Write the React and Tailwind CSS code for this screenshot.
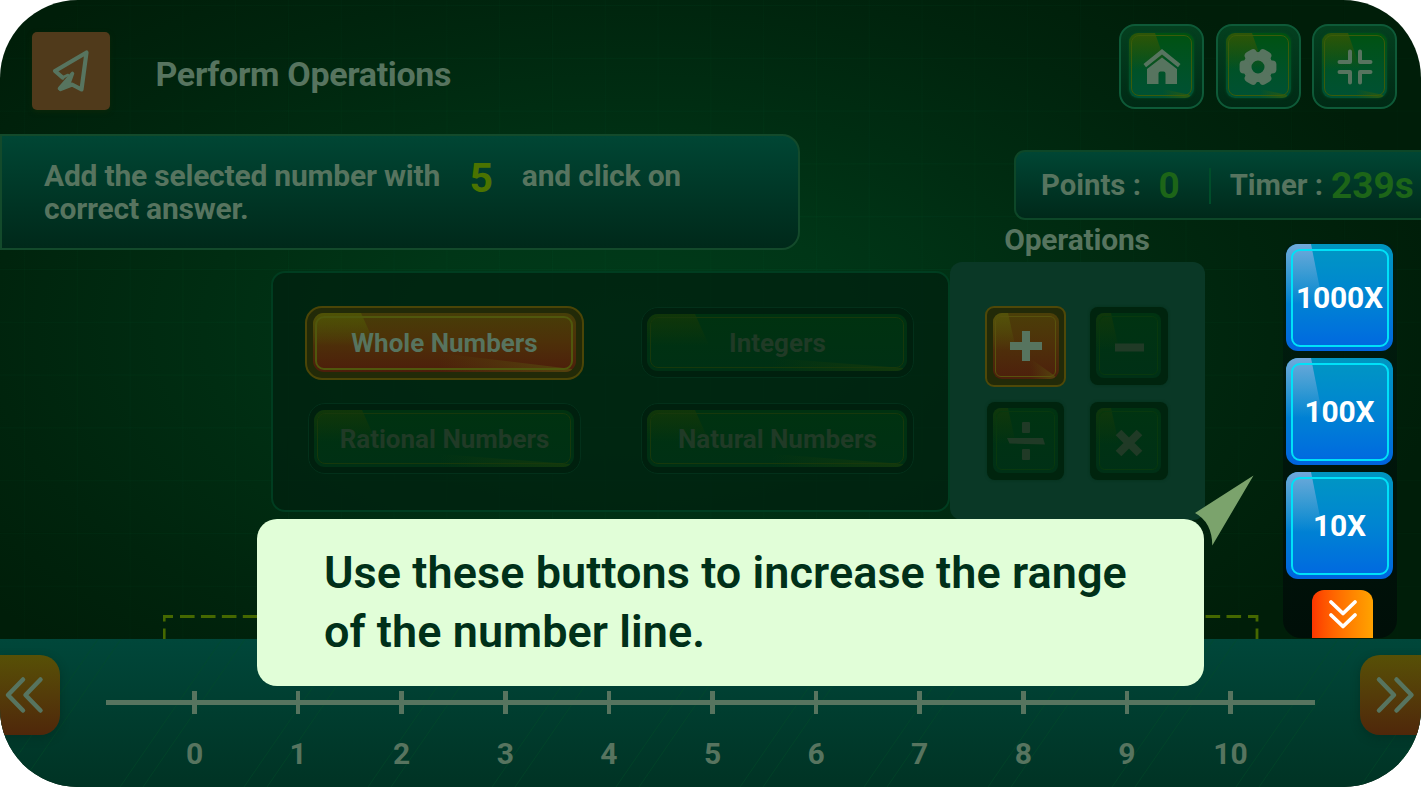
import React from "react";

function Gloss({ width, height, cut, slope = 0.45, top, wedge, flareX, flareY, id }) {
  return (
    <svg className="absolute inset-0 h-full w-full" viewBox={`0 0 ${width} ${height}`} preserveAspectRatio="none">
      <defs>
        <linearGradient id={`${id}-a`} x1="0" y1="0" x2="0" y2="1">
          <stop offset="0" stopColor={top} stopOpacity="1" />
          <stop offset="1" stopColor={top} stopOpacity="0" />
        </linearGradient>
        <linearGradient id={`${id}-b`} x1="0" y1="0" x2="1" y2="0">
          <stop offset="0" stopColor={wedge} stopOpacity="0" />
          <stop offset="1" stopColor={wedge} stopOpacity="1" />
        </linearGradient>
      </defs>
      <path d={`M0 0H${cut}L${cut + height * 0.56 * slope} ${height * 0.56}H0Z`} fill={`url(#${id}-a)`} />
      {flareX !== undefined && (
        <path d={`M${flareX} ${flareY}L${width - 4} ${height - 3}V${height}H${flareX}Z`} fill={`url(#${id}-b)`} />
      )}
    </svg>
  );
}

function TopButton({ id, children }) {
  return (
    <button className="flex h-[85px] w-[85px] items-center justify-center rounded-[16px] border-2 border-[#0e5a38] bg-linear-to-b from-[#04401f] to-[#002a15] pb-[2px]">
      <span className="relative flex h-[65px] w-[65px] items-center justify-center overflow-hidden rounded-[9px] bg-linear-to-b from-[#00520f] to-[#005134] shadow-[0_0_3px_#034d22]">
        <Gloss id={id} width={65} height={65} cut={26} slope={0.35} top="#2f5508" wedge="#2c5a10" flareX={34} flareY={56} />
        <span className="absolute inset-[2px] rounded-[8px] border-[1.5px] border-[#3a5c0a]" />
        <span className="relative top-[1px]">{children}</span>
      </span>
    </button>
  );
}

function TypeButton({ id, label, active }) {
  if (active) {
    return (
      <button className="relative -mx-[3px] -my-[1.5px] flex h-[74px] w-[279px] items-center justify-center rounded-[17px] border-2 border-[#4b4507] bg-[#222a08]">
        <span className="relative flex h-[59px] w-[263px] items-center justify-center overflow-hidden rounded-[11px] bg-linear-to-b from-[#473e08] via-[#4d3009] to-[#4d1d0b]">
          <Gloss id={id} width={263} height={59} cut={48} top="#4f5206" wedge="#54420d" flareX={125} flareY={40} />
          <span className="absolute inset-[2.5px] rounded-[9px] border-2 border-[#50580d]" />
          <span className="relative left-[0.5px] text-[26px] leading-none font-bold text-[#57745f]">{label}</span>
        </span>
      </button>
    );
  }
  return (
    <button className="relative flex h-[71px] w-[273px] items-center justify-center rounded-[17px] border-[1.5px] border-[#03301a] bg-[#00200e]">
      <span className="relative flex h-[57px] w-[260px] items-center justify-center overflow-hidden rounded-[11px] bg-linear-to-b from-[#003210] to-[#003014]">
        <Gloss id={id} width={260} height={57} cut={48} top="#113609" wedge="#12380c" flareX={125} flareY={44} />
        <span className="absolute inset-[3px] rounded-[8px] border border-[#17380b]" />
        <span className="relative left-[0.5px] text-[26px] leading-none font-bold text-[#203a26]">{label}</span>
      </span>
    </button>
  );
}

function OpButton({ id, active, children }) {
  if (active) {
    return (
      <button className="-m-[1.25px] flex h-[81px] w-[81px] items-center justify-center rounded-[9px] border-2 border-[#4f4808] bg-[#222a08]">
        <span className="relative flex h-[66px] w-[66px] items-center justify-center overflow-hidden rounded-[9px] bg-linear-to-b from-[#4b3f08] via-[#4e300a] to-[#4d1f0c]">
          <Gloss id={id} width={66} height={66} cut={15} slope={0.22} top="#54520a" wedge="#54420d" flareX={38} flareY={46} />
          <span className="absolute inset-[2.5px] rounded-[6px] border border-[#58520d]" />
          <span className="relative">{children}</span>
        </span>
      </button>
    );
  }
  return (
    <button className="flex h-[77.5px] w-[77.5px] items-center justify-center rounded-[8px] bg-[#00240e] shadow-[0_0_3px_#04301b]">
      <span className="relative flex h-[65px] w-[65px] items-center justify-center overflow-hidden rounded-[8px] bg-linear-to-b from-[#003311] to-[#003016]">
        <Gloss id={id} width={65} height={65} cut={15} slope={0.22} top="#10370b" wedge="#0a3310" />
        <span className="absolute inset-[3px] rounded-[6px] border border-[#08380e]" />
        <span className="relative left-[0.5px]">{children}</span>
      </span>
    </button>
  );
}

function RangeButton({ id, label }) {
  return (
    <button className="relative flex h-[107px] w-[107px] shrink-0 items-center justify-center overflow-hidden rounded-[12px] bg-linear-to-b from-[#0095c0] via-[#0082d0] to-[#0063de]">
      <span className="absolute inset-[5.5px] rounded-[8px] bg-linear-to-b from-[#0095c4] via-[#0084d2] to-[#0069e0]" />
      <Gloss id={id} width={107} height={107} cut={25} slope={0.2} top="#70a8dc" wedge="#0069e0" />
      <span className="absolute inset-[4.5px] rounded-[9px] border-2 border-[#00e1f8]" />
      <span className="relative text-[30px] leading-none font-bold tracking-[-0.2px] text-white">{label}</span>
    </button>
  );
}

function Chevrons({ className, d, width, height, strokeWidth = 4.5 }) {
  return (
    <svg className={className} width={width} height={height} viewBox={`0 0 ${width} ${height}`} fill="none" stroke="currentColor" strokeWidth={strokeWidth} strokeLinecap="round" strokeLinejoin="round">
      <path d={d} />
    </svg>
  );
}

const ticks = [0, 1, 2, 3, 4, 5, 6, 7, 8, 9, 10];

export default function App() {
  return (
    <div className="h-[787px] w-[1421px] overflow-hidden bg-white font-['Roboto',sans-serif]">
      <div className="relative flex h-full w-full flex-col overflow-hidden rounded-[78px] bg-[radial-gradient(ellipse_820px_440px_at_630px_330px,#003b1a_0%,#003617_28%,#002d12_52%,#00240d_78%,#001e09_100%)]">
        <div className="absolute inset-0 bg-[linear-gradient(to_right,#00502a28_1px,transparent_1px),linear-gradient(to_bottom,#00502a38_1px,transparent_1px)] [mask-image:radial-gradient(ellipse_900px_500px_at_640px_330px,black_20%,#0004_100%)] bg-[size:52.8px_52.8px] bg-[position:24px_5px]" />

        <header className="relative flex h-[134px] shrink-0 items-start pl-[32px]">
          <div className="mt-[32px] h-[77.5px] w-[78px] rounded-[5px] bg-[#503a1b] shadow-[0_2px_5px_#0a2609]">
            <svg width="78" height="78" viewBox="0 0 78 78" fill="none" stroke="#57745f" strokeWidth="4.2" strokeLinejoin="round" strokeLinecap="round">
              <path d="M30.500 45.500L23 39L54.500 20.500L49.500 57.500L40 52.500L28.500 57" />
              <path d="M27.500 56.500L40.500 41.500L36.500 52.500Z" fill="#57745f" strokeWidth="3.600" />
              <path d="M30.500 45.500L36 43" strokeWidth="2.500" />
            </svg>
          </div>
          <h1 className="mt-[56.500px] ml-[45.500px] text-[34px] leading-none font-bold tracking-[-0.34px] text-[#57745f]">Perform Operations</h1>
          <div className="mt-[24px] mr-[24px] ml-auto flex gap-[11.3px]">
            <TopButton id="home">
              <svg width="38" height="36" viewBox="0 0 38 36" fill="#57745f">
                <path d="M19 0L37.500 15L35 18.200L19 5.500L3 18.200L0.500 15Z" />
                <path d="M19 8.500L34 20V35H22.500V24.500Q22.500 22.500 20.500 22.500H17.500Q15.500 22.500 15.500 24.500V35H4V20Z" />
              </svg>
            </TopButton>
            <TopButton id="gear">
              <svg width="38" height="36" viewBox="-19 -18 38 36" fill="none" stroke="#57745f">
                <circle r="10.800" strokeWidth="8.600" />
                <g fill="#57745f" stroke="none">
                  {[0, 60, 120, 180, 240, 300].map((a) => (
                    <rect key={a} x="8" y="-6.500" width="10.400" height="13" rx="4" transform={`rotate(${a})`} />
                  ))}
                </g>
              </svg>
            </TopButton>
            <TopButton id="shrink">
              <svg width="36" height="36" viewBox="0 0 36 36" fill="none" stroke="#57745f" strokeWidth="4" strokeLinecap="round" strokeLinejoin="round">
                <path d="M13 2.500V13H2.500M23 2.500V13H33.500M13 33.500V23H2.500M23 33.500V23H33.500" />
              </svg>
            </TopButton>
          </div>
        </header>

        <main className="relative flex h-[481px] shrink-0">
          <div className="w-[950px] shrink-0">
            <section className="h-[116px] w-[800px] rounded-r-[18px] border-[2.5px] border-[#134a2b] bg-linear-to-b from-[#004634] to-[#00291a] pt-[22.500px] pl-[42px] text-[30px] font-bold text-[#57745f]">
              <div className="flex h-[34px] items-center leading-[34px] tracking-[-0.22px]">
                <span>Add the selected number with</span>
                <span className="ml-[29.500px] pt-[6px] text-[41px] leading-none text-[#4b7300]">5</span>
                <span className="ml-[29px] tracking-[-0.2px]">and click on</span>
              </div>
              <p className="leading-[32px] tracking-[-0.2px]">correct answer.</p>
            </section>

            <section className="mt-[21px] ml-[271px] grid h-[241px] w-[679px] grid-cols-[273px_273px] grid-rows-[71px_71px] gap-x-[60px] gap-y-[25px] rounded-[14px] border-2 border-[#003d20] bg-[#00200e]/75 pt-[34px] pl-[34.500px]">
              <TypeButton id="whole" label="Whole Numbers" active />
              <TypeButton id="integers" label="Integers" />
              <TypeButton id="rational" label="Rational Numbers" />
              <TypeButton id="natural" label="Natural Numbers" />
            </section>
          </div>

          <div className="flex-1">
            <section className="mt-[16px] ml-[64px] flex h-[70px] items-center rounded-l-[11px] border-2 border-r-0 border-[#0d4728] bg-linear-to-b from-[#004634] to-[#00291a] pt-[1px] pl-[25px] text-[29.3px] font-bold whitespace-nowrap text-[#57745f]">
              <span>Points :</span>
              <span className="ml-[17.500px] text-[37px] leading-none text-[#1d6518]">0</span>
              <span className="ml-[29px] h-[36px] w-[2px] bg-[#004d2a]" />
              <span className="ml-[19px]">Timer :</span>
              <span className="ml-[8px] text-[37px] leading-none text-[#1d6518]">239s</span>
            </section>
            <h2 className="mt-[5px] w-[254px] text-center text-[30px] leading-none font-bold tracking-[-0.2px] text-[#57745f]">Operations</h2>
            <section className="mt-[7px] h-[258px] w-[255px] rounded-[12px] bg-[#0a3826] pt-[45px] pl-[36.500px]">
              <div className="grid grid-cols-[78.5px_78.5px] grid-rows-[78.5px_78.5px] gap-x-[25px] gap-y-[16.500px]">
                <OpButton id="plus" active>
                  <svg width="32" height="32" viewBox="0 0 32 32" fill="#57745f">
                    <path d="M12 1H20V12H32V20H20V31H12V20H0V12H12Z" />
                  </svg>
                </OpButton>
                <OpButton id="minus">
                  <svg width="29" height="32" viewBox="0 0 29 32" fill="#203a26" className="mt-[2px]">
                    <path d="M0 12.500H29V20.500H0Z" />
                  </svg>
                </OpButton>
                <OpButton id="divide">
                  <svg width="38" height="40" viewBox="0 0 38 40" fill="#203a26">
                    <rect x="15" y="1" width="8" height="11" rx="1" />
                    <rect x="15" y="28" width="8" height="11" rx="1" />
                    <path d="M0 17H36L38 23.500L2.500 22.500Z" />
                  </svg>
                </OpButton>
                <OpButton id="times">
                  <svg width="28" height="28" viewBox="0 0 28 28" stroke="#203a26" strokeWidth="8" className="mt-[4px]">
                    <path d="M3.500 3.500L24.500 24.500M24.500 3.500L3.500 24.500" />
                  </svg>
                </OpButton>
              </div>
            </section>
          </div>
        </main>

        <div className="relative h-[24px] shrink-0 pl-[163px]">
          <svg width="1096" height="24" viewBox="0 0 1096 24" fill="none" stroke="#456800" strokeWidth="2.800">
            <path d="M1.200 24V13.500M1.200 6.500V1.500H10M1094 24V13.500M1094 6.500V1.500H1085" />
            <path d="M17 1.500H1078.500" strokeDasharray="14.600 6.330" />
          </svg>
        </div>

        <footer className="relative flex h-[148px] shrink-0 items-start justify-between bg-linear-to-b from-[#00473a] to-[#003324]">
          <svg className="absolute inset-0" width="1421" height="148" fill="none" stroke="#00502a" strokeOpacity="0.45">
            {[-26, 98, 222, 346, 470, 594, 718, 842, 966, 1090, 1214, 1338, 1462].map((x) => (
              <path key={x} d={`M${x} 0L${x - 102} 148M${x + 23} 0L${x - 79} 148`} />
            ))}
          </svg>
          <button className="relative mt-[16px] h-[80px] w-[60px] rounded-r-[20px] bg-linear-to-b from-[#575006] to-[#4f270a] text-[#57745f] shadow-[0_3px_10px_#00241866]">
            <Chevrons className="absolute top-[20px] left-[4px]" width={42} height={40} d="M19 4.500L4 20L19 35.500M36.500 4.500L21.500 20L36.500 35.500" />
          </button>
          <div className="relative mt-[52px] flex w-[1209px] justify-center">
            <span className="absolute top-[9px] left-0 h-[4.500px] w-[1209px] bg-[#57745f]" />
            <div className="ml-[5px] flex">
              {ticks.map((n) => (
                <div key={n} className="flex w-[103.6px] flex-col items-center gap-[25px]">
                  <span className="h-[23px] w-[4.500px] bg-[#57745f]" />
                  <span className="text-[30px] leading-none font-bold text-[#57745f]">{n}</span>
                </div>
              ))}
            </div>
          </div>
          <button className="relative mt-[16px] h-[80px] w-[61px] rounded-l-[20px] bg-linear-to-b from-[#575006] to-[#4f270a] text-[#57745f] shadow-[0_3px_10px_#00241866]">
            <Chevrons className="absolute top-[20px] left-[14px]" width={42} height={40} d="M5 4.500L20 20L5 35.500M22.500 4.500L37.500 20L22.500 35.500" />
          </button>
        </footer>

        <aside className="absolute top-[240px] left-[1283px] flex h-[398px] w-[114px] flex-col items-start gap-[7px] overflow-hidden rounded-[18px] bg-linear-to-b from-[#001c12]/50 to-[#000c08]/85 pt-[4px] pl-[3px]">
          <RangeButton id="r1000" label="1000X" />
          <RangeButton id="r100" label="100X" />
          <RangeButton id="r10" label="10X" />
          <button className="mt-[4px] ml-[26px] flex h-[49px] w-[61px] shrink-0 justify-center rounded-t-[12px] bg-linear-to-r from-[#fc3500] to-[#ffa300] pt-[8.500px] text-white">
            <Chevrons width={30} height={32} strokeWidth={3.8} d="M3 3L15 14.500L27 3M3 16L15 27.500L27 16" />
          </button>
        </aside>

        <svg className="absolute top-[475px] left-[1194px]" width="61" height="72" viewBox="0 0 61 72" fill="#7ba36c">
          <path d="M1 38L59.500 0.500L18.300 70.500Q18 47 1 38Z" />
        </svg>
        <div className="absolute top-[519px] left-[257px] h-[167px] w-[947px] rounded-[20px] bg-[#e1fed8] pt-[23.500px] pl-[67px] text-[45px] leading-[59px] font-semibold tracking-[0.06px] whitespace-nowrap text-[#003019]">
          <p>Use these buttons to increase the range</p>
          <p>of the number line.</p>
        </div>
      </div>
    </div>
  );
}
